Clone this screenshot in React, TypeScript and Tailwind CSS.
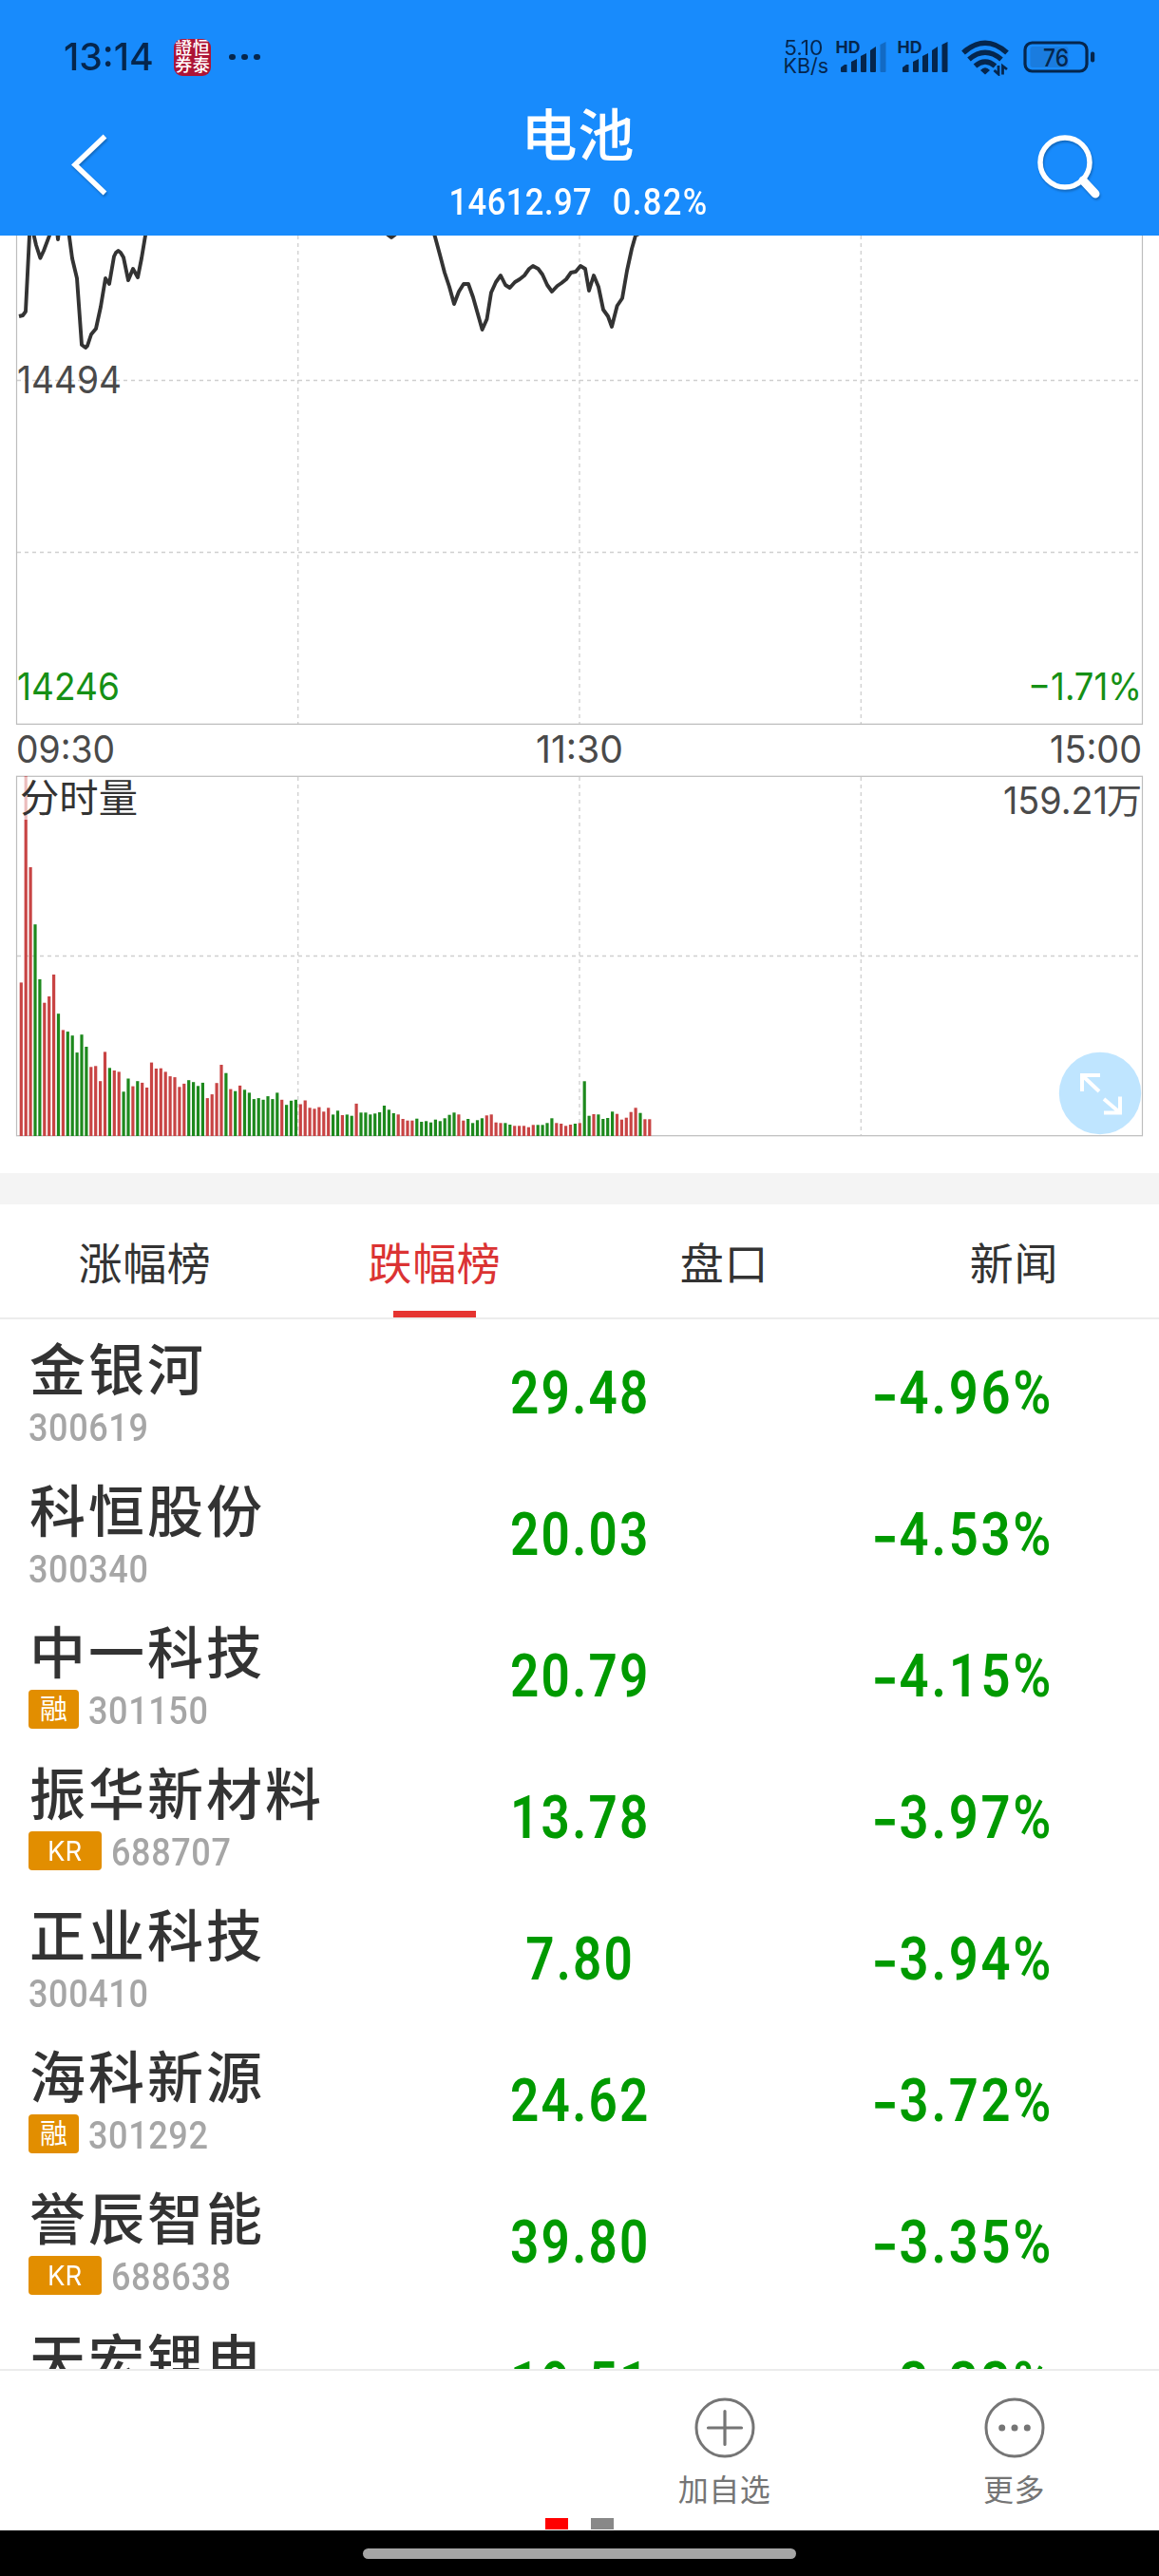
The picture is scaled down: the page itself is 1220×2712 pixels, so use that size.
import React from "react";

type Bar = [number, "r" | "g"];

// Volume per tick: bar height in pixels and direction.
const BARS: Bar[] = (
  "161.6r 378.6r 283r 222.8g 165g 140.3r 147r 170r 128.8g 111.6r 109.9g 105.8g 87.9g 106.8g 94g 72.7r 73.7r 57.8r 88.6r 71.7g 69r 67.6r 46.7g 60.5g 52.4r 57.8g 56.1r 51r 77.4r 71r 71.3r 67.6r 62.9r 61.9r 51.7r 55.1r 58.8g 56.8g 52.7g 56.1g 39.9r 43.9r 55.8r 75r 66.3g 49.4r 47.3g 53.1r 48.7g 45.6g 38.9g 39.9g 38.2g 41.9g 38.9g 45.6g 38.2r 32.8g 37.2g 38.2g 33.5r 37.5r 29.7r 28.7r 30.4r 25.7r 29.7r 22.6g 26.7g 22r 22.6g 21.3g 34.1r " +
  "24.7g 24.7g 22.7g 23.7g 25g 32g 27.7g 24g 22.7r 18r 16.3r 16.3r 18.3g 15g 15.7g 14.3g 17.3g 15.7g 18.7g 22.3g 24.7g 22.7r 16.3r 18g 13.7g 16.7g 18.7g 21.7r 22.7r 14.3r 13.7r 13.7g 12g 10.7r 10.7r 10.7r 9.3r 11.7r 11.7g 11.7g 13.7g 18.7g 13.7r 13r 10.7r 12r 13g 13.7r 57.7g 21.3g 23r 22.7g 18g 19g 25.7g 23.3r 17.3r 19.3r 25.3r 29.7r 24.3g 17.7r 17.7r"
)
  .split(" ")
  .map((s) => [parseFloat(s), s.endsWith("r") ? "r" : "g"] as Bar);

const PRICE_A =
  "20,333 24,332 27,328 31,248 31,230 35.7,248 38,258 42.4,271.7 46,264 52,248 58,225 61,252 64,225 72.8,248 76,272 81,293 86,363 90,366 92,364 96,352 101,346 106,323 111,293 115,299 120,270 122,266 124.5,264 127,266 130,271 135,295 140,283 145,292 149,272 153,248 156,230";
const PRICE_B =
  "400,225 408,247 412,250 416,247 425,228 445,228 457.6,248 463,268 468,287 473,302 478,320 483,307 488,299 493,299 498,313 507.6,347 512.5,336 517,308 522,297 527,290 532,300 536.6,303 542,297 547,294 552,290 557,283 561,280 566.5,283 571,289 576,300 581,307 586.6,301 591,298 596,294 601,287 606,286 611,280 616,283 620,306 625,290 630,302 635,326 640,333 644,344 649.6,322 655,314 660,285 665,262 669,248 673,246 680,230";

const HAN = "font-['Inter','Noto_Sans_CJK_SC',sans-serif]";

function ChartText(p: { x: number; y: number; w: number; size: number; fill: string; children: string }) {
  return (
    <text x={p.x} y={p.y} fontSize={p.size} fill={p.fill} textLength={p.w} lengthAdjust="spacingAndGlyphs">
      {p.children}
    </text>
  );
}

function Charts() {
  const dash = { stroke: "#cfcfcf", strokeWidth: 1.3, strokeDasharray: "4 4" };
  return (
    <svg width="1220" height="987" viewBox="0 248 1220 987" className={`block ${HAN}`}>
      {[313.7, 610, 906.3].map((x) => (
        <g key={x}>
          <line x1={x} x2={x} y1="248" y2="762" {...dash} />
          <line x1={x} x2={x} y1="818" y2="1195" {...dash} />
        </g>
      ))}
      {[400.5, 581.5, 1006.5].map((y) => (
        <line key={y} x1="18" x2="1202" y1={y} y2={y} {...dash} />
      ))}
      <path d="M17.5 240V762.3H1202.5V240" fill="none" stroke="#bdbdbd" strokeWidth="1.2" />
      <rect x="17.5" y="817.3" width="1185" height="378.4" fill="none" stroke="#bdbdbd" strokeWidth="1.2" />
      <polyline points={PRICE_A} fill="none" stroke="#333" strokeWidth="3.9" strokeLinejoin="round" />
      <polyline points={PRICE_B} fill="none" stroke="#333" strokeWidth="3.9" strokeLinejoin="round" />
      {BARS.map(([h, c], i) => (
        <rect
          key={i}
          x={22.3 + i * 4.9 - 1.6}
          y={1196 - h}
          width="3.2"
          height={h}
          fill={c === "r" ? "#c84444" : "#1d891d"}
        />
      ))}
      <rect x="20" y="818" width="126" height="45" fill="#fff" opacity="0.65" />
      <ChartText x={18} y={414} w={110} size={39} fill="#4a4a4a">14494</ChartText>
      <ChartText x={18} y={736.5} w={108} size={39} fill="#159015">14246</ChartText>
      <ChartText x={1082} y={736.5} w={120} size={39} fill="#159015">−1.71%</ChartText>
      <ChartText x={17} y={803} w={104} size={39} fill="#4a4a4a">09:30</ChartText>
      <ChartText x={564} y={803} w={92} size={39} fill="#4a4a4a">11:30</ChartText>
      <ChartText x={1105} y={803} w={97} size={39} fill="#4a4a4a">15:00</ChartText>
      <ChartText x={21} y={855} w={124} size={41} fill="#333">分时量</ChartText>
      <ChartText x={1056} y={857} w={110} size={39} fill="#4a4a4a">159.21</ChartText>
      <ChartText x={1165} y={857} w={37} size={37} fill="#4a4a4a">万</ChartText>
      <circle cx="1158" cy="1151" r="43.2" fill="#bfe5ff" />
      <path
        d="M1139 1149V1132H1158M1139 1132L1157 1149M1162 1171.5H1179V1154.5M1179 1171.5L1162 1157"
        fill="none"
        stroke="#fff"
        strokeWidth="4"
      />
    </svg>
  );
}

function Signal({ weak }: { weak?: boolean }) {
  return (
    <svg width="56" height="36" viewBox="0 0 56 36" className="overflow-visible font-['Inter',sans-serif]">
      <text x="0.500" y="14" fontSize="17.5" fontWeight="700" fill="#05264d" textLength="26" lengthAdjust="spacingAndGlyphs">HD</text>
      <path d="M6 33V29l4-3h2.5v8H7q-1 0-1-1z" fill="#05264d" />
      <path d="M17 23l6-3v13q0 1-1 1h-4q-1 0-1-1zM27 17l6-3v19q0 1-1 1h-4q-1 0-1-1zM37 11l6-4v26q0 1-1 1h-4q-1 0-1-1z" fill="#05264d" />
      <path d="M47.500 5l6-3v31q0 1-1 1h-4q-1 0-1-1z" fill="#05264d" opacity={weak ? 0.32 : 1} />
    </svg>
  );
}

function StatusBar() {
  return (
    <div className={`flex h-[120px] items-center pl-[67px] text-[#05264d] ${HAN}`}>
      <div className="w-[116px] text-[40px] font-medium leading-none">
        <div className="w-max origin-left scale-x-[0.98]">13:14</div>
      </div>
      <div className="grid h-[39px] w-[39px] grid-cols-2 place-items-center overflow-hidden rounded-[9px] bg-[#ad1436] p-[1px] text-[18px] font-medium leading-[18px] text-white">
        <span>證</span>
        <span>恒</span>
        <span>券</span>
        <span>泰</span>
      </div>
      <div className="ml-[19px] flex gap-[6.5px]">
        <i className="h-[6.500px] w-[6.500px] rounded-full bg-[#05264d]" />
        <i className="h-[6.500px] w-[6.500px] rounded-full bg-[#05264d]" />
        <i className="h-[6.500px] w-[6.500px] rounded-full bg-[#05264d]" />
      </div>
      <div className="ml-[551px] w-[54px] text-[21.5px] leading-[19px]">
        <div className="w-max origin-left scale-x-[1.06]">5.10</div>
        <div className="w-max origin-left">KB/s</div>
      </div>
      <Signal weak />
      <div className="w-[9px]" />
      <Signal />
      <svg width="52" height="40" viewBox="0 0 52 40" className="ml-[11px]">
        <g fill="none" stroke="#05264d" strokeWidth="5.500">
          <path d="M3 15.500Q26 -5 49 15.500" />
          <path d="M9 22.500Q26 8 43 22.500" />
          <path d="M15.500 29.500Q26 20.500 36.500 29.500" />
        </g>
        <path d="M21 34Q26 28.500 31 34L26 38.500z" fill="#05264d" />
        <path d="M40 29V38L35.500 34M44.500 38.500V29.500L49 33" fill="none" stroke="#05264d" strokeWidth="2.800" />
      </svg>
      <svg width="78" height="34" viewBox="0 0 78 34" className="ml-[14px]">
        <rect x="7.500" y="6" width="40" height="22" rx="3" fill="#1a7cdf" />
        <rect x="2" y="2" width="65" height="30" rx="7.500" fill="none" stroke="#05264d" strokeWidth="3.200" />
        <rect x="71" y="11.500" width="4.200" height="11" rx="2" fill="#05264d" />
        <text x="21" y="26.500" fontSize="25" fontWeight="500" fill="#05264d" textLength="27" lengthAdjust="spacingAndGlyphs">76</text>
      </svg>
    </div>
  );
}

function Header() {
  return (
    <header className="h-[248px] bg-[#188bfc]">
      <StatusBar />
      <div className="-mt-2 flex h-[136px] justify-between text-white">
        <svg width="244" height="120" viewBox="0 112 244 120" className="drop-shadow-[1px_2px_1px_rgba(0,0,0,0.25)]">
          <path d="M110.500 143.500L79 173.500L110.500 203.500" fill="none" stroke="#fff" strokeWidth="5.500" />
        </svg>
        <div className="flex flex-col items-center">
          <h1 className={`mr-[3px] mt-px text-[59px] font-medium leading-[60px] tracking-[1px] ${HAN}`}>电池</h1>
          <div className="mr-[3px] mt-[19px] flex w-[310px] scale-x-[0.9] justify-center gap-[24px] whitespace-pre font-['Roboto',sans-serif] text-[38.4px] font-medium leading-[42px]">
            <span className="tracking-[0.5px]">14612.97</span>
            <span className="tracking-[1.5px]">0.82%</span>
          </div>
        </div>
        <svg width="244" height="120" viewBox="977 112 244 120" className="drop-shadow-[1px_2px_1px_rgba(0,0,0,0.25)]">
          <ellipse cx="1122" cy="171" rx="26" ry="26" fill="none" stroke="#fff" strokeWidth="5.500" />
          <path d="M1141 190L1154 204" stroke="#fff" strokeWidth="9" strokeLinecap="round" />
        </svg>
      </div>
    </header>
  );
}

const ROWS: { name: string; code: string; tag?: string; price: string; pct: string }[] = [
  { name: "金银河", code: "300619", price: "29.48", pct: "4.96%" },
  { name: "科恒股份", code: "300340", price: "20.03", pct: "4.53%" },
  { name: "中一科技", code: "301150", tag: "融", price: "20.79", pct: "4.15%" },
  { name: "振华新材料", code: "688707", tag: "KR", price: "13.78", pct: "3.97%" },
  { name: "正业科技", code: "300410", price: "7.80", pct: "3.94%" },
  { name: "海科新源", code: "301292", tag: "融", price: "24.62", pct: "3.72%" },
  { name: "誉辰智能", code: "688638", tag: "KR", price: "39.80", pct: "3.35%" },
  { name: "天宏锂电", code: "873152", price: "19.51", pct: "3.33%" },
];

function Row({ r }: { r: (typeof ROWS)[number] }) {
  return (
    <div className="flex h-[149px]">
      <div className="w-[406px] pl-[30px]">
        <div className={`ml-px mt-[18px] h-[71px] whitespace-nowrap text-[59px] font-medium leading-[71px] tracking-[3px] text-[#333] ${HAN}`}>
          {r.name}
        </div>
        <div className="mt-[3px] flex h-[41px] items-center">
          {r.tag && (
            <span
              className={`mr-[10px] flex h-[41px] items-center justify-center rounded-[4px] bg-[#e28e00] text-white ${HAN} ${
                r.tag === "KR" ? "w-[77px] text-[29px]" : "w-[53px] text-[29px]"
              }`}
            >
              <span className={r.tag === "KR" ? "scale-x-[0.95]" : ""}>{r.tag}</span>
            </span>
          )}
          <span className="mt-[4px] w-max origin-left scale-x-[0.9] font-['Roboto',sans-serif] text-[40px] font-medium leading-[40px] tracking-[0.7px] text-[#a6a6a6]">
            {r.code}
          </span>
        </div>
      </div>
      <div className="flex w-[408px] justify-center pl-[2px] pt-[42px] font-['Roboto',sans-serif] text-[62.5px] font-semibold leading-[72px] text-[#009a00]">
        <span className="scale-x-[0.85] tracking-[2.6px]">{r.price}</span>
      </div>
      <div className="flex w-[406px] pl-[103px] pt-[42px] font-['Roboto',sans-serif] text-[62.5px] font-semibold leading-[72px] text-[#009a00]">
        <span className="flex origin-left scale-x-[0.87] tracking-[3.2px]">
          <span className="w-[34px]">
            <span className={`inline-block origin-left scale-x-[1.15] ${HAN}`}>-</span>
          </span>
          <span>{r.pct}</span>
        </span>
      </div>
    </div>
  );
}

export default function App() {
  return (
    <div className="flex h-[2712px] w-[1220px] flex-col overflow-hidden bg-white">
      <Header />
      <Charts />
      <div className="h-[33px] shrink-0 bg-[#f4f4f4]" />
      <nav className={`grid h-[121px] shrink-0 grid-cols-4 border-b-2 border-[#ececec] text-[46px] tracking-[0.7px] text-[#333] ${HAN}`}>
        {["涨幅榜", "跌幅榜", "盘口", "新闻"].map((t) => (
          <div key={t} className={`flex flex-col items-center justify-between ${t === "跌幅榜" ? "text-[#db3333]" : ""}`}>
            <span className="mt-[29px] leading-[66px]">{t}</span>
            {t === "跌幅榜" && <span className="h-[7px] w-[87px] bg-[#e53430]" />}
          </div>
        ))}
      </nav>
      <main className="h-[1105px] shrink-0 overflow-hidden">
        {ROWS.map((r) => (
          <Row key={r.code} r={r} />
        ))}
      </main>
      <footer className={`h-[170px] shrink-0 border-t-2 border-[#ececec] ${HAN}`}>
        <div className="grid h-[155px] grid-cols-4 text-[32px] leading-[44px] tracking-[0.5px] text-[#757575]">
          <div className="col-start-3 flex flex-col items-center pt-[27px]">
            <svg width="66" height="66" viewBox="0 0 66 66" fill="none" stroke="#757575">
              <circle cx="33" cy="33" r="30" strokeWidth="3" />
              <path d="M33 15.500V50.500M15.500 33H50.500" strokeWidth="3.200" strokeLinecap="round" />
            </svg>
            <span className="mt-[11px]">加自选</span>
          </div>
          <div className="flex flex-col items-center pt-[27px]">
            <svg width="66" height="66" viewBox="0 0 66 66" fill="#757575">
              <circle cx="33" cy="33" r="30" strokeWidth="3" stroke="#757575" fill="none" />
              <circle cx="19.700" cy="33" r="3.500" />
              <circle cx="33" cy="33" r="3.500" />
              <circle cx="46.300" cy="33" r="3.500" />
            </svg>
            <span className="mt-[11px]">更多</span>
          </div>
        </div>
        <div className="flex justify-center gap-[24px]">
          <i className="h-[12px] w-[24px] bg-[#ff0000]" />
          <i className="h-[12px] w-[24px] bg-[#888888]" />
        </div>
      </footer>
      <div className="flex h-[48px] shrink-0 justify-center bg-black pt-[19px]">
        <div className="h-[11px] w-[456px] rounded-full bg-[#a5a5a5]" />
      </div>
    </div>
  );
}
